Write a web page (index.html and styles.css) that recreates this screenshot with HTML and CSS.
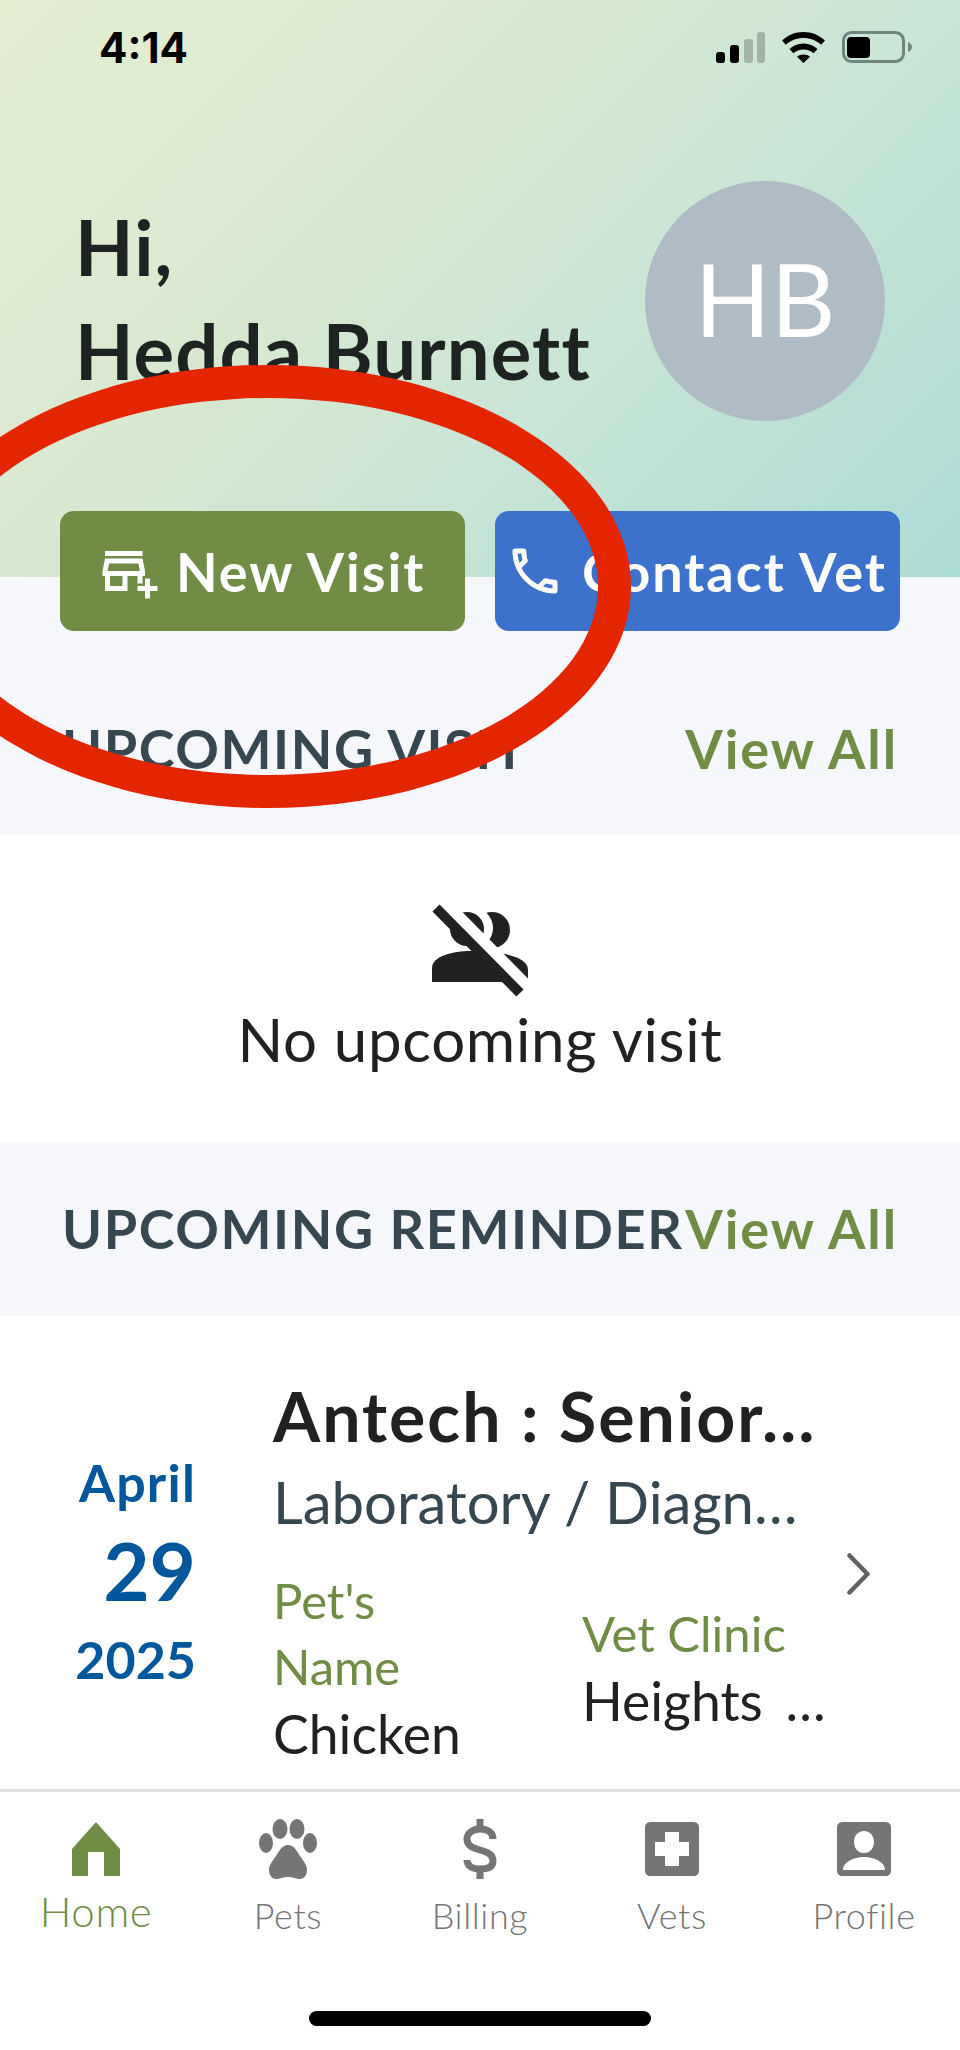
FILE: index.html
```html
<!DOCTYPE html>
<html lang="en">
<head>
<meta charset="utf-8">
<title>Home</title>
<link rel="stylesheet" href="styles.css">
</head>
<body>
<div class="app">
  <div class="top">
    <header class="hero">
      <div class="status">
        <span class="time">4:14</span>
        <div class="status-icons">
          <svg class="ic-signal" viewBox="0 0 49 31"><rect x="0" y="20" width="9" height="11" rx="3"/><rect x="14" y="13" width="9" height="18" rx="3"/><rect class="dim" x="28" y="7" width="9" height="24" rx="3"/><rect class="dim" x="41" y="0" width="8" height="31" rx="3"/></svg>
          <svg class="ic-wifi" viewBox="0 0 43 31"><path d="M21.500 0C13 0 5.800 3.300 0 8.500L3.800 12.800C8.500 8.500 14.600 6 21.500 6S34.500 8.500 39.200 12.800L43 8.500C37.200 3.300 30 0 21.500 0Z"/><path d="M21.500 11.500C16 11.500 11.200 13.600 7.500 17L11.300 21.300C14 18.900 17.500 17.400 21.500 17.400S29 18.900 31.700 21.300L35.500 17C31.800 13.600 27 11.500 21.500 11.500Z"/><path d="M21.500 22.500C19 22.500 16.800 23.300 15 24.800L21.500 31L28 24.800C26.200 23.300 24 22.500 21.500 22.500Z"/></svg>
          <svg class="ic-batt" viewBox="0 0 70 32"><rect class="batt-shell" x="1.500" y="1.500" width="60" height="29" rx="8"/><rect x="5" y="6" width="23" height="21" rx="4"/><path class="batt-nub" d="M66 11C68.500 12 70 14 70 16S68.500 20 66 21Z"/></svg>
        </div>
      </div>
      <div class="greeting">
        <h1 class="hello">Hi,<br>Hedda Burnett</h1>
        <div class="avatar">HB</div>
      </div>
    </header>

    <div class="actions">
      <button class="action action-green">
        <svg class="action-ic" viewBox="0 0 24 24"><path d="M2 4h15v2H2z M15 17h2v-3h1v-2l-1-5H2l-1 5v2h1v6h9v-6h4v3zm-6 1H4v-4h5v4zm-5.960-6 .6-3h11.720l.6 3H3.040zM20 18v-3h-2v3h-3v2h3v3h2v-3h3v-2h-3z"/></svg>
        <span>New Visit</span>
      </button>
      <button class="action action-blue">
        <svg class="action-ic" viewBox="0 0 24 24"><path d="M6.540 5c.06.89.21 1.760.45 2.590l-1.200 1.200c-.41-1.200-.67-2.470-.76-3.790h1.510m9.860 12.020c.85.24 1.720.39 2.600.45v1.490c-1.320-.09-2.590-.35-3.800-.75l1.200-1.190M7.500 3H4c-.55 0-1 .45-1 1 0 9.390 7.610 17 17 17 .55 0 1-.45 1-1v-3.490c0-.55-.45-1-1-1-1.240 0-2.450-.2-3.570-.57-.1-.04-.21-.05-.31-.05-.26 0-.51.1-.71.29l-2.200 2.200c-2.830-1.450-5.150-3.760-6.590-6.590l2.200-2.200c.28-.28.36-.67.25-1.020C8.700 6.450 8.500 5.250 8.500 4c0-.55-.45-1-1-1z"/></svg>
        <span>Contact Vet</span>
      </button>
    </div>

    <div class="section-head head-visit">
      <h2 class="section-title">UPCOMING VISIT</h2>
      <a class="view-all">View All</a>
    </div>
  </div>

  <section class="empty">
    <svg class="empty-ic" viewBox="0 0 160 130">
      <circle class="ink" cx="92" cy="50" r="18"/>
      <circle class="paper" cx="72" cy="48" r="21"/>
      <circle class="ink" cx="67" cy="49" r="17"/>
      <path class="ink" d="M32 102V88C32 76 54 71 70 71C92 71 128 74 128 90V102Z"/>
      <path class="slash-gap" d="M43 21L127 106"/>
      <path class="slash" d="M36 28L120 113"/>
    </svg>
    <p class="empty-text">No upcoming visit</p>
  </section>

  <div class="section-head head-reminder">
    <h2 class="section-title">UPCOMING REMINDER</h2>
    <a class="view-all">View All</a>
  </div>

  <section class="reminder">
    <div class="date">
      <span class="date-month">April</span>
      <span class="date-day">29</span>
      <span class="date-year">2025</span>
    </div>
    <div class="detail">
      <h3 class="detail-title">Antech : Senior…</h3>
      <p class="detail-sub">Laboratory / Diagn…</p>
      <div class="meta">
        <div class="meta-pet">
          <span class="meta-label">Pet's<br>Name</span>
          <span class="meta-value">Chicken</span>
        </div>
        <div class="meta-clinic">
          <span class="meta-label">Vet Clinic</span>
          <span class="meta-value">Heights …</span>
        </div>
      </div>
    </div>
    <svg class="chevron" viewBox="0 0 24 42"><path d="M2.500 2.500L20.500 21L2.500 39.500"/></svg>
  </section>

  <nav class="tabs">
    <a class="tab tab-active">
      <svg class="tab-ic" viewBox="0 0 60 60"><path d="M30 3L54 30V57H38V33H22V57H6V30Z"/></svg>
      <span class="tab-label">Home</span>
    </a>
    <a class="tab">
      <svg class="tab-ic" viewBox="0 0 60 60"><ellipse cx="22" cy="10" rx="7.500" ry="10"/><ellipse cx="39" cy="10" rx="7.500" ry="10"/><ellipse cx="8" cy="24" rx="7" ry="10"/><ellipse cx="52" cy="24" rx="7" ry="10"/><path d="M30 26C36 26 38 31 42 37C46 43 49 46 49 51C49 56 46 60 42 60C38 60 35 58 30 58C25 58 22 60 18 60C14 60 11 56 11 51C11 46 14 43 18 37C22 31 24 26 30 26Z"/></svg>
      <span class="tab-label">Pets</span>
    </a>
    <a class="tab">
      <svg class="tab-ic" viewBox="0 0 60 60"><path class="dollar" d="M43 20C43 13 37 10 30 10S17 14 17 20C17 27 23 29 30 31C37 33 43 35 43 42C43 48 37 50 30 50S17 47 17 41"/><rect x="26.500" y="0" width="7" height="12"/><rect x="26.500" y="48" width="7" height="12"/></svg>
      <span class="tab-label">Billing</span>
    </a>
    <a class="tab">
      <svg class="tab-ic" viewBox="0 0 60 60"><path fill-rule="evenodd" d="M9 3H51C55 3 57 5 57 9V51C57 55 55 57 51 57H9C5 57 3 55 3 51V9C3 5 5 3 9 3ZM23 13V23H13V37H23V47H37V37H47V23H37V13Z"/></svg>
      <span class="tab-label">Vets</span>
    </a>
    <a class="tab">
      <svg class="tab-ic" viewBox="0 0 60 60"><path fill-rule="evenodd" d="M9 3H51C55 3 57 5 57 9V51C57 55 55 57 51 57H9C5 57 3 55 3 51V9C3 5 5 3 9 3ZM30 12C23.500 12 20 17 20 23S23.500 34 30 34S40 29 40 23S36.500 12 30 12ZM30 38C20 38 9 43 9 51H51C51 43 40 38 30 38Z"/></svg>
      <span class="tab-label">Profile</span>
    </a>
  </nav>
  <div class="home-bar"><span class="home-indicator"></span></div>

  <div class="annotation"></div>
</div>
</body>
</html>
```
FILE: styles.css
```css
* { box-sizing: border-box; }
html, body { margin: 0; padding: 0; background: #fff; }
body { font-family: Lato, "Noto Sans", sans-serif; color: #212121; }
h1, h2, h3, p { margin: 0; font-size: inherit; font-weight: inherit; }

.app {
  position: relative;
  width: 960px;
  height: 2050px;
  overflow: hidden;
  background: #fff;
}

.top { background: #f6f7fb; }

.hero {
  height: 577px;
  padding: 24px 48px 0 0;
  background: linear-gradient(135deg, #e4efd2 0%, #d8e8d0 37%, #c8e5d6 63%, #abdbd5 100%);
}

.status {
  display: flex;
  justify-content: space-between;
  align-items: center;
  height: 46px;
  padding-left: 99px;
}
.time {
  font-family: Inter, "Liberation Sans", sans-serif;
  font-size: 42px;
  font-weight: 700;
  color: #000;
}
.status-icons {
  display: flex;
  align-items: center;
  gap: 17px;
}
.status-icons svg { display: block; fill: #000; }
.ic-signal { width: 49px; height: 31px; }
.ic-wifi { width: 43px; height: 31px; }
.ic-batt { width: 70px; height: 32px; }
.dim { opacity: 0.22; }
.batt-shell { fill: none; stroke: #6f8580; stroke-width: 3; }
.batt-nub { fill: #6f8580; }

.greeting {
  display: flex;
  justify-content: space-between;
  align-items: center;
  margin-top: 111px;
  padding-left: 75px;
  padding-right: 27px;
}
.hello {
  font-size: 76px;
  font-weight: 700;
  line-height: 104px;
  letter-spacing: 1.1px;
  color: #1d2320;
  margin-top: -4px;
}
.avatar {
  display: flex;
  align-items: center;
  justify-content: center;
  width: 240px;
  height: 240px;
  padding-bottom: 6px;
  border-radius: 50%;
  background: #b0bcc5;
  color: #fff;
  font-size: 100px;
  font-weight: 400;
}

.actions {
  display: flex;
  gap: 30px;
  margin-top: -66px;
  padding: 0 60px;
  position: relative;
}
.action {
  display: flex;
  align-items: center;
  flex: 0 0 405px;
  height: 120px;
  padding: 0;
  border: 0;
  border-radius: 14px;
  color: #fff;
  font-family: inherit;
  font-size: 54px;
  font-weight: 700;
  letter-spacing: 2px;
  white-space: nowrap;
}
.action-green { background: #718c44; padding-left: 40px; gap: 16px; }
.action-blue { background: #3c72cc; padding-left: 10px; gap: 17px; }
.action-ic { width: 60px; height: 60px; fill: #fff; flex: none; }

.section-head {
  display: flex;
  justify-content: space-between;
  align-items: center;
  padding: 0 62px;
  background: #f6f7fb;
  font-size: 54px;
  font-weight: 700;
  white-space: nowrap;
}
.head-visit { height: 204px; padding-top: 30px; }
.head-reminder { height: 174px; padding-bottom: 2px; }
.section-title { color: #37474f; letter-spacing: 1.6px; }
.view-all { color: #718c44; letter-spacing: 1.9px; }

.empty {
  display: flex;
  flex-direction: column;
  align-items: center;
  height: 307px;
  padding-top: 45px;
}
.empty-ic { display: block; width: 160px; height: 130px; margin-bottom: -7px; }
.ink { fill: #212121; }
.paper { fill: #fff; }
.slash { stroke: #212121; stroke-width: 10; fill: none; }
.slash-gap { stroke: #fff; stroke-width: 12; fill: none; }
.empty-text { font-size: 60px; line-height: 72px; letter-spacing: 0.7px; color: #212121; }

.reminder {
  display: flex;
  height: 473px;
}
.date {
  display: flex;
  flex-direction: column;
  align-items: flex-end;
  flex: none;
  width: 196px;
  padding-top: 134px;
  color: #01579b;
}
.date-month { font-size: 52px; font-weight: 700; line-height: 64px; letter-spacing: 1.2px; }
.date-day { font-size: 80px; font-weight: 700; line-height: 112px; }
.date-year { font-size: 52px; font-weight: 700; line-height: 66px; }
.detail { flex: none; width: 579px; padding: 60px 0 0 77px; }
.detail-title { font-size: 68px; font-weight: 700; line-height: 80px; letter-spacing: 2px; white-space: nowrap; }
.detail-sub { font-size: 58px; line-height: 72px; color: #37474f; white-space: nowrap; margin-top: 10px; }
.meta { display: flex; align-items: center; margin-top: 29px; }
.meta-pet { width: 309px; flex: none; display: flex; flex-direction: column; }
.meta-clinic { display: flex; flex-direction: column; }
.meta-label { font-size: 49px; line-height: 66px; color: #718c44; }
.meta-value { font-size: 53.500px; line-height: 68px; color: #212121; white-space: nowrap; }
.meta-clinic .meta-value { word-spacing: 9px; }
.chevron {
  flex: none;
  width: 24px;
  height: 42px;
  margin: 237px 0 0 72px;
  fill: none;
  stroke: #616161;
  stroke-width: 4.500;
  stroke-linecap: round;
  stroke-linejoin: round;
}

.tabs {
  display: grid;
  grid-template-columns: repeat(5, 1fr);
  height: 160px;
  padding-top: 27px;
  border-top: 3px solid #e0e0e0;
}
.tab {
  display: flex;
  flex-direction: column;
  align-items: center;
  color: #757575;
}
.tab-ic { display: block; width: 60px; height: 60px; fill: #757575; }
.tab-label { font-size: 36px; line-height: 44px; margin-top: 14px; font-weight: 300; letter-spacing: 0.6px; }
.tab-active { color: #718c44; }
.tab-active .tab-ic { fill: #718c44; }
.tab-active .tab-label { font-size: 42px; margin-top: 10px; }
.dollar { fill: none; stroke: #757575; stroke-width: 7; }

.home-bar {
  display: flex;
  justify-content: center;
  padding-top: 62px;
}
.home-indicator {
  display: block;
  width: 342px;
  height: 15px;
  border-radius: 8px;
  background: #000;
}

.annotation {
  position: absolute;
  left: -95px;
  top: 365px;
  width: 726px;
  height: 443px;
  border: 33px solid #e32600;
  border-radius: 50%;
  pointer-events: none;
}
```
